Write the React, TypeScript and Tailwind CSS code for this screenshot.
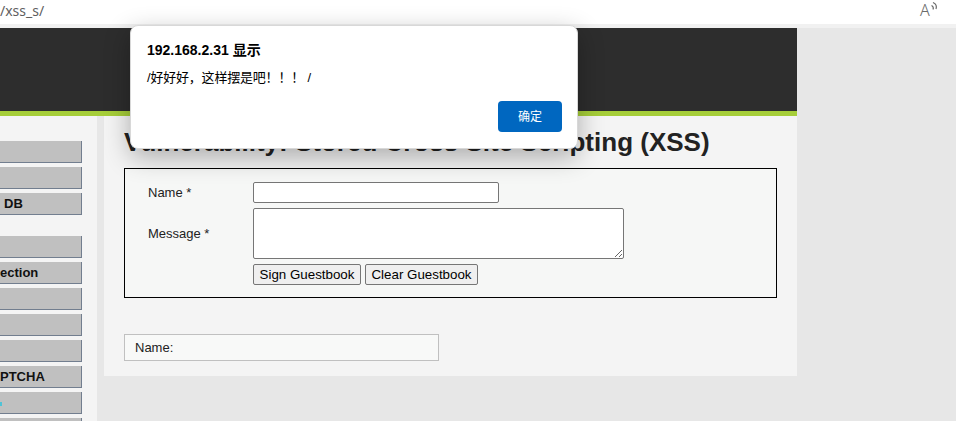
import React from 'react'

const firstGroup = ['', '', 'DB']
const secondGroup = ['', 'ection', '', '', '', 'PTCHA', 'mark', '']

function MenuButton({ label }: { label: string }) {
    return (
        <div className="h-[22px] w-[82px] bg-[#c0c0c0] border-r border-b border-[#727e8f] flex items-center text-[13px] font-bold text-[#111] leading-none overflow-hidden">
            {label === 'mark' ? (
                <span className="block w-[2px] h-[4px] bg-[#4fc3d6] mt-[2px]" />
            ) : label === 'DB' ? (
                <span className="pl-[4px]">{label}</span>
            ) : (
                <span>{label}</span>
            )}
        </div>
    )
}

export default function App() {
    return (
        <div className="relative w-[956px] h-[421px] overflow-hidden bg-[#e7e7e7] font-['Liberation_Sans',Arial,sans-serif]">
            {/* address bar */}
            <div className="h-[24px] bg-white flex items-start justify-between">
                <span className="mt-[3px] text-[14px] text-[#5f5f5f] font-['Noto_Sans',sans-serif] leading-[16px]">/xss_s/</span>
                <div className="relative mr-[18px] mt-[1px] w-[18px] h-[18px]">
                    <span className="absolute left-0 top-0 text-[16px] leading-[18px] font-light text-[#6a6a6a] font-['Noto_Sans',sans-serif]">A</span>
                    <svg className="absolute left-[10px] top-0" width="9" height="10" viewBox="0 0 9 10" fill="none" stroke="#6a6a6a" strokeWidth="1.2">
                        <path d="M1.5 4.5 Q3.8 5.3 3.2 8.5" />
                        <path d="M3 1.5 Q7.5 3.5 6 8" />
                    </svg>
                </div>
            </div>
            <div className="h-[4px] bg-[#f1f1f1]" />

            {/* page */}
            <div className="w-[797px]">
                <div className="h-[83px] bg-[#2d2d2d]" />
                <div className="h-[5px] bg-[#a6ce39]" />
                <div className="flex gap-[7px] items-start">
                    <div className="w-[97px] h-[320px] bg-[#f4f4f4] pt-[25px]">
                        <div className="flex flex-col gap-[4px]">
                            {firstGroup.map((l, i) => (
                                <MenuButton key={'a' + i} label={l} />
                            ))}
                        </div>
                        <div className="flex flex-col gap-[4px] mt-[21px]">
                            {secondGroup.map((l, i) => (
                                <MenuButton key={'b' + i} label={l} />
                            ))}
                        </div>
                    </div>

                    <div className="flex-1 bg-[#f4f4f4] pl-[20px] pr-[20px] pt-[12px] pb-[15px] text-[#222]">
                        <h1 className="text-[26px] leading-[29px] font-bold text-[#222] whitespace-nowrap">
                            Vulnerability: Stored Cross Site Scripting (XSS)
                        </h1>

                        <div className="mt-[11px] w-[653px] h-[130px] border border-black bg-[#f6f7f6] pt-[13px]">
                            <div className="flex items-center h-[21px]">
                                <span className="w-[128px] pl-[23px] text-[13px] text-[#222]">Name *</span>
                                <input className="w-[246px] h-[21px] bg-white border border-[#767676] rounded-[2px] outline-none" />
                            </div>
                            <div className="flex items-center h-[51px] mt-[5px]">
                                <span className="w-[128px] pl-[23px] text-[13px] text-[#222]">Message *</span>
                                <textarea className="w-[371px] h-[51px] bg-white border border-[#767676] rounded-[2px] outline-none resize" />
                            </div>
                            <div className="flex gap-[4px] mt-[5px] pl-[128px]">
                                <button className="w-[108px] h-[21px] bg-[#efefef] border border-[#767676] rounded-[2px] text-[13.33px] text-black leading-none">
                                    Sign Guestbook
                                </button>
                                <button className="w-[113px] h-[21px] bg-[#efefef] border border-[#767676] rounded-[2px] text-[13.33px] text-black leading-none">
                                    Clear Guestbook
                                </button>
                            </div>
                        </div>

                        <div className="mt-[36px] w-[315px] h-[27px] border border-[#c0c0c0] bg-[#f8f9f8] pl-[10px] flex items-center text-[13px] text-[#222]">
                            Name:
                        </div>
                    </div>
                </div>
            </div>

            {/* alert dialog */}
            <div className="absolute left-[130px] top-[25px] w-[448px] h-[124px] bg-white rounded-[8px] border border-[#d8d8d8] shadow-[0_8px_26px_rgba(0,0,0,0.3)] pl-[16px] pr-[15px] pt-[14px] font-['Liberation_Sans','Noto_Sans_CJK_SC',sans-serif]">
                <div className="text-[14px] leading-[20px] font-bold text-black">192.168.2.31 显示</div>
                <div className="mt-[9px] text-[13px] leading-[18px] text-black tracking-[-0.2px]">/好好好，这样摆是吧！！！ /</div>
                <div className="flex justify-end mt-[14px]">
                    <button className="w-[64px] h-[31px] bg-[#0067c0] rounded-[4px] text-white text-[12px] leading-none">确定</button>
                </div>
            </div>
        </div>
    )
}
